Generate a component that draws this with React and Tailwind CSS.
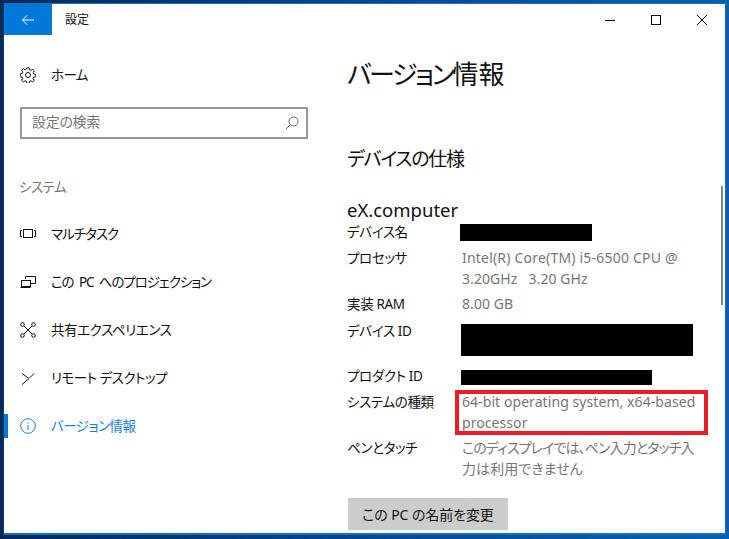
import React from "react";

const NavItem = ({ icon, label, active, track = "tracking-[-0.5px]" }) => (
  <div className={"relative flex h-[48px] items-center pl-[16px] " + (active ? "text-[#1a7fd4]" : "text-[#111]")}>
    {active && <div className="absolute left-0 top-[12px] h-[24px] w-[4px] bg-[#0078d7]" />}
    <div className="flex w-[31px] shrink-0 items-center">{icon}</div>
    <span className={"text-[13.5px] " + track}>{label}</span>
  </div>
);

const Row = ({ label, children, labelClass = "" }) => (
  <div className="mb-[4px] grid min-h-[22px] grid-cols-[115px_1fr] text-[14px] leading-[21px]">
    <div className={"text-[13.5px] tracking-[-0.35px] text-[#111] " + labelClass}>{label}</div>
    <div className="-mt-[1px] mb-[1px] tracking-[0.07px] text-[#767676]">{children}</div>
  </div>
);

const Redact = ({ w, h, className = "" }) => <div className={"bg-black " + className} style={{ width: w, height: h }} />;

const s = { fill: "none", stroke: "currentColor", strokeWidth: 1 };

export default function App() {
  return (
    <div className="relative h-[539px] w-[729px] overflow-hidden bg-[linear-gradient(90deg,#062a55_0%,#0a4c94_60%,#0a60ae_100%)] pt-[3px] pb-[4px] pl-[3px] pr-[3px] font-['Noto_Sans','Noto_Sans_CJK_JP',sans-serif] [font-feature-settings:'palt']">
      <div className="relative h-full overflow-hidden border border-b-[2px] border-[#1170c9] border-l-[#0a3a70] bg-white">
        <div className="flex h-[31px] items-center">
          <div className="flex h-[31px] w-[48px] items-center justify-center bg-[#0078d7] text-white">
            <svg width="14" height="12" viewBox="0 0 14 12" {...s}><path d="M13 6H1.500M6 1.500L1.500 6L6 10.500" /></svg>
          </div>
          <span className="ml-[13px] text-[12px] text-[#111]">設定</span>
          <div className="ml-auto flex items-center text-black">
            <div className="flex w-[46px] justify-center">
              <svg width="12" height="12" viewBox="0 0 12 12" {...s}><path d="M1 6.5h10" /></svg>
            </div>
            <div className="flex w-[46px] justify-center">
              <svg width="12" height="12" viewBox="0 0 12 12" {...s}><rect x="1.5" y="1.5" width="9" height="9" /></svg>
            </div>
            <div className="flex w-[46px] justify-center">
              <svg width="12" height="12" viewBox="0 0 12 12" {...s}><path d="M1 1l10 10M11 1L1 11" /></svg>
            </div>
          </div>
        </div>

        <div className="flex">
          <aside className="w-[343px] shrink-0">
            <div className="mt-[16px] flex h-[48px] items-center pl-[16px] text-[#111]">
              <div className="flex w-[31px] shrink-0 items-center">
                <svg width="16" height="16" viewBox="0 0 16 16" {...s}>
                  <circle cx="8" cy="8" r="2.5" />
                  <path d="M6.800 .8h2.400l.4 2 1.300.6 1.800-1.100 1.600 1.600-1.100 1.800.6 1.300 2 .4v2.400l-2 .4-.6 1.300 1.100 1.800-1.600 1.600-1.800-1.100-1.300.6-.4 2H6.800l-.4-2-1.300-.6-1.800 1.100-1.600-1.600 1.100-1.800-.6-1.300-2-.4V6.800l2-.4.6-1.300-1.100-1.800 1.600-1.600 1.800 1.100 1.300-.6z" />
                </svg>
              </div>
              <span className="text-[13.5px] tracking-[-0.6px]">ホーム</span>
            </div>
            <div className="ml-[16px] mt-[8px] flex h-[32px] w-[288px] items-center justify-between border-2 border-[#999] pl-[10px] pr-[7px]">
              <span className="-mt-[3px] text-[14px] tracking-[-0.3px] text-[#767676]">設定の検索</span>
              <svg width="14" height="14" viewBox="0 0 14 14" className="text-[#666]" {...s}>
                <circle cx="8.500" cy="5.500" r="4.500" /><path d="M5.300 8.700L.8 13.200" />
              </svg>
            </div>
            <div className="ml-[15px] mt-[38px] text-[13.5px] leading-[21px] tracking-[-0.5px] text-[#767676]">システム</div>
            <div className="mt-[12px]">
              <NavItem label="マルチタスク" track="tracking-[-1px]" icon={
                <svg width="16" height="16" viewBox="0 0 16 16" {...s}>
                  <rect x="3.500" y="3.500" width="9" height="8" /><path d="M2 4.500H.5v6H2M14 4.500h1.500v6H14" />
                </svg>} />
              <NavItem label="この PC へのプロジェクション" track="tracking-[-1.1px] [word-spacing:3px]" icon={
                <svg width="16" height="16" viewBox="0 0 16 16" {...s}>
                  <path d="M5.500 5V2.500h10v7H10" /><rect x="1.500" y="6.500" width="9" height="6" /><path d="M.5 13.500h10" />
                </svg>} />
              <NavItem label="共有エクスペリエンス" track="tracking-[-0.4px]" icon={
                <svg width="16" height="16" viewBox="0 0 16 16" {...s}>
                  <circle cx="2.500" cy="2.500" r="1.800" /><circle cx="13.500" cy="2.500" r="1.800" /><circle cx="2.500" cy="13.500" r="1.800" /><circle cx="13.500" cy="13.500" r="1.800" /><path d="M4 4l8 8M12 4l-8 8" />
                </svg>} />
              <NavItem label="リモート デスクトップ" track="tracking-[-0.5px]" icon={
                <svg width="16" height="16" viewBox="0 0 16 16" {...s}>
                  <path d="M2 3.500L9 8.500L2 14.500M9.500 8L14 3.500" />
                </svg>} />
              <NavItem active label="バージョン情報" icon={
                <svg width="16" height="16" viewBox="0 0 16 16" {...s}>
                  <circle cx="8" cy="8" r="7.300" /><path d="M8 7v5M8 4.500v1.200" />
                </svg>} />
            </div>
          </aside>

          <main className="flex-1">
            <h1 className="mt-[18px] text-[26px] leading-[42px] text-[#111]"><span className="tracking-[-2.4px]">バージョン</span>情報</h1>
            <h2 className="mt-[49px] text-[19px] leading-[30px] tracking-[-1.2px] text-[#111]">デバイスの仕様</h2>
            <div className="mt-[24px] text-[18.5px] leading-[24px] text-[#111]">eX.computer</div>
            <div>
              <Row label="デバイス名"><Redact w={132} h={17} className="-ml-[2px] mt-[3px]" /></Row>
              <Row label="プロセッサ"><span className="tracking-[0.2px]">Intel(R) Core(TM) i5-6500 CPU @</span><br />3.20GHz&nbsp;&nbsp; 3.20 GHz</Row>
              <Row label="実装 RAM">8.00 GB</Row>
              <Row label="デバイス ID" labelClass="pt-[1px]"><Redact w={232} h={32} className="-ml-[1px] mb-[5px] mt-[5px]" /></Row>
              <Row label="プロダクト ID"><Redact w={191} h={15} className="-ml-[1px] mt-[5px]" /></Row>
              <Row label="システムの種類">64-bit operating system, x64-based<br />processor</Row>
              <Row label="ペンとタッチ"><span className="tracking-[-0.9px]">このディスプレイでは、ペン入力とタッチ入</span><br />力は利用できません</Row>
            </div>
            <div className="ml-[1px] mt-[18px] flex h-[32px] w-[160px] items-center justify-center bg-[#cccccc] text-[14px] tracking-[-0.1px] text-[#111]">この PC の名前を変更</div>
          </main>
        </div>

        <div className="absolute right-[2px] top-[182px] h-[119px] w-[2px] bg-[#858585]" />
        <div className="absolute left-[451px] top-[386px] h-[45px] w-[253px] border-[4px] border-[#ed1c24]" />
      </div>
    </div>
  );
}
